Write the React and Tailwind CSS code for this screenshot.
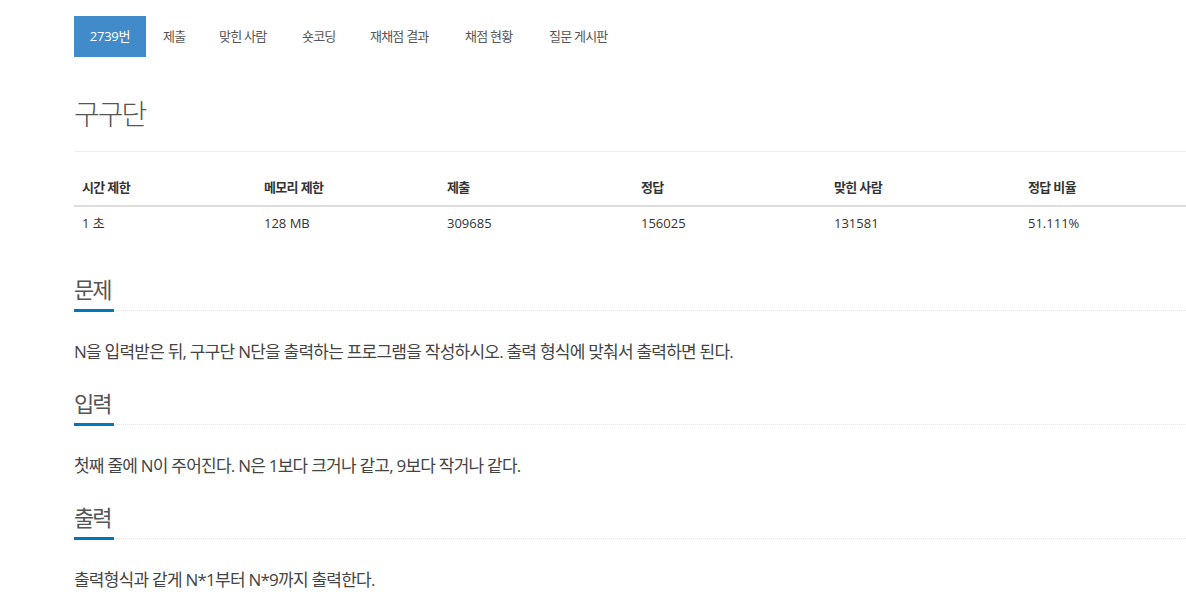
const tabs = [
    { label: "제출", w: "w-[56px]" },
    { label: "맞힌 사람", w: "w-[83px]" },
    { label: "숏코딩", w: "w-[68px]" },
    { label: "재채점 결과", w: "w-[95px]" },
    { label: "채점 현황", w: "w-[84px]" },
    { label: "질문 게시판", w: "w-[94px]" },
];

const columns = [
    { head: "시간 제한", value: "1 초", w: "w-[182px]" },
    { head: "메모리 제한", value: "128 MB", w: "w-[183px]" },
    { head: "제출", value: "309685", w: "w-[194px]" },
    { head: "정답", value: "156025", w: "w-[193px]" },
    { head: "맞힌 사람", value: "131581", w: "w-[194px]" },
    { head: "정답 비율", value: "51.111%", w: "flex-1" },
];

const sections = [
    {
        title: "문제",
        body: "N을 입력받은 뒤, 구구단 N단을 출력하는 프로그램을 작성하시오. 출력 형식에 맞춰서 출력하면 된다.",
    },
    {
        title: "입력",
        body: "첫째 줄에 N이 주어진다. N은 1보다 크거나 같고, 9보다 작거나 같다.",
    },
    {
        title: "출력",
        body: "출력형식과 같게 N*1부터 N*9까지 출력한다.",
    },
];

function Section({ title, body, first }) {
    return (
        <section className={first ? "mt-[35px]" : "mt-[23px]"}>
            {/* 제목 + 파란 밑줄 */}
            <div className="border-b border-dotted border-[#e6e6e6] h-[35px] flex items-end">
                <span className="inline-block w-[40px] h-[37px] pt-[1px] border-b-[3px] border-[#0076c0] -mb-[2px] text-[22px] leading-[26px] tracking-[-0.09em] text-[#555] whitespace-nowrap">
                    {title}
                </span>
            </div>
            <p className="mt-[26px] text-[17px] leading-[30px] tracking-[-0.045em] text-[#444]">
                {body}
            </p>
        </section>
    );
}

export default function App() {
    return (
        <div className="w-full h-[603px] overflow-hidden bg-white pl-[74px] font-['Open_Sans','Noto_Sans_CJK_KR',sans-serif] text-[#333]">
            {/* 상단 탭 */}
            <ul className="flex mt-[16px] h-[41px] text-[13px]">
                <li className="w-[72px] bg-[#428bca] text-white flex items-center justify-center tracking-[-0.02em]">
                    2739번
                </li>
                {tabs.map((t) => (
                    <li
                        key={t.label}
                        className={`${t.w} pl-[17px] flex items-center text-[#555] tracking-[-0.06em] whitespace-nowrap`}
                    >
                        {t.label}
                    </li>
                ))}
            </ul>

            {/* 문제 제목 */}
            <div className="mt-[41px] pb-[20px] border-b border-[#eee]">
                <h1 className="h-[33px] text-[28px] leading-[33px] font-light tracking-[-0.07em] text-[#555]">
                    구구단
                </h1>
            </div>

            {/* 제한 표 */}
            <div className="mt-[18px] text-[13px]">
                <div className="flex h-[37px] border-b-2 border-[#ddd] font-bold">
                    {columns.map((c) => (
                        <div
                            key={c.head}
                            className={`${c.w} pl-[8px] flex items-center tracking-[-0.05em] whitespace-nowrap`}
                        >
                            {c.head}
                        </div>
                    ))}
                </div>
                <div className="flex h-[34px]">
                    {columns.map((c) => (
                        <div key={c.head} className={`${c.w} pl-[8px] flex items-center whitespace-nowrap`}>
                            {c.value}
                        </div>
                    ))}
                </div>
            </div>

            {sections.map((s, i) => (
                <Section key={s.title} {...s} first={i === 0} />
            ))}
        </div>
    );
}
